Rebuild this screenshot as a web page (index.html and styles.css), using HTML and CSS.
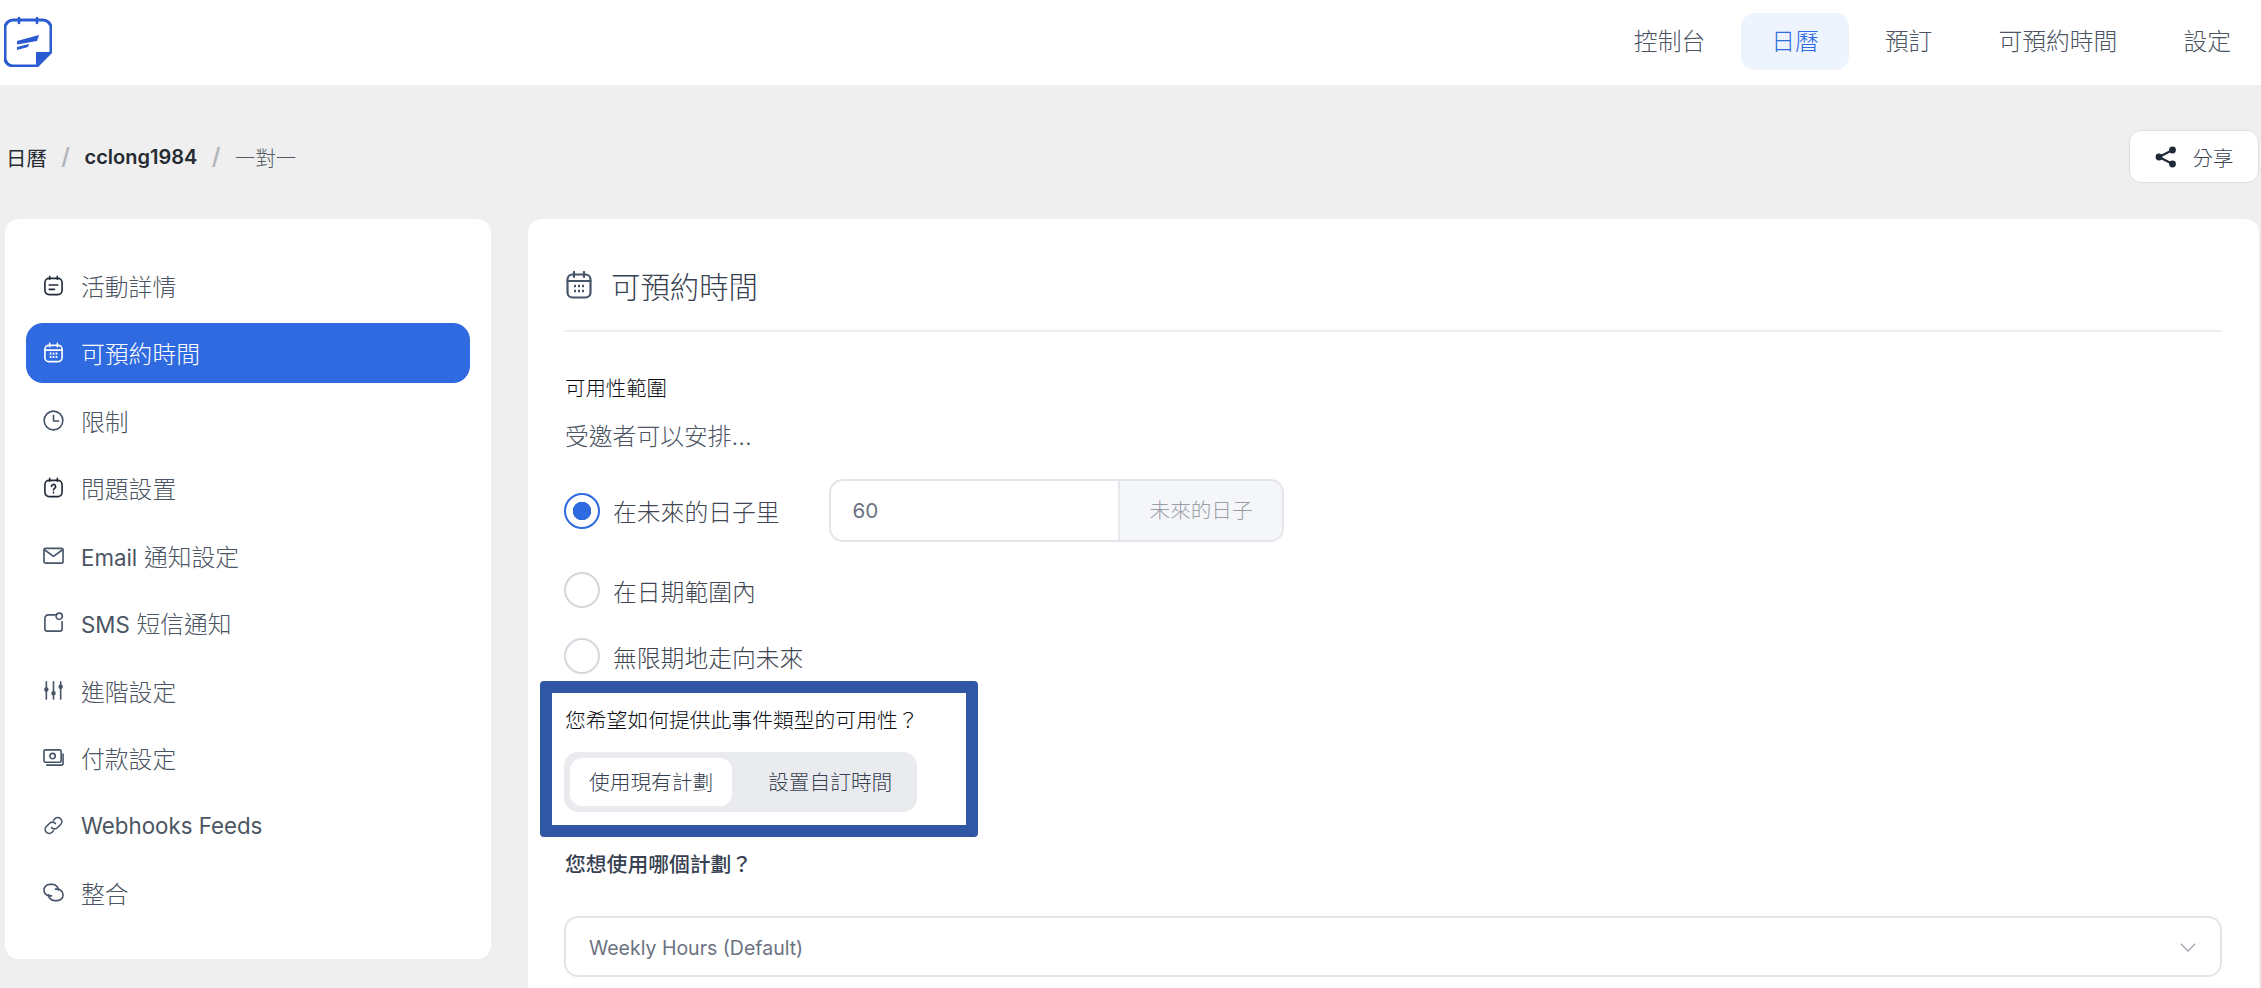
FILE: index.html
```html
<!DOCTYPE html>
<html lang="zh-Hant">
<head>
  <meta charset="UTF-8">
  <title>可預約時間</title>
  <link rel="stylesheet" href="styles.css">
</head>
<body>
  <header class="topbar">
    <svg class="logo" viewBox="0 0 48 50" fill="none">
      <path d="M9 3h30a8 8 0 0 1 8 8v24L33 49H9a8 8 0 0 1-8-8V11a8 8 0 0 1 8-8z" stroke="#2b5bd0" stroke-width="3"/>
      <path d="M15 1v5M33 1v5" stroke="#2b5bd0" stroke-width="2.600" stroke-linecap="round"/>
      <path d="M47 35H32v13z" fill="#2b5bd0"/>
      <path d="M13 24L35 18L33 24L13 27.500z" fill="#2b5bd0"/>
      <path d="M13 30L25 27L24 30L13 33z" fill="#2b5bd0"/>
    </svg>
    <nav class="nav">
      <a class="nav-item">控制台</a>
      <a class="nav-item active">日曆</a>
      <a class="nav-item">預訂</a>
      <a class="nav-item">可預約時間</a>
      <a class="nav-item">設定</a>
    </nav>
  </header>

  <div class="crumb-row">
    <div class="crumbs">
      <span class="crumb-first">日曆</span>
      <span class="crumb-sep">/</span>
      <span class="crumb-strong">cclong1984</span>
      <span class="crumb-sep">/</span>
      <span class="crumb-last">一對一</span>
    </div>
    <button class="share-btn">
      <svg class="share-icon" viewBox="0 0 22 22" fill="#1f2937">
        <circle cx="17.500" cy="4" r="3.400"/>
        <circle cx="4" cy="11" r="3.400"/>
        <circle cx="17.500" cy="18" r="3.400"/>
        <path d="M4 11l13.500-7M4 11l13.500 7" stroke="#1f2937" stroke-width="2.200"/>
      </svg>
      <span>分享</span>
    </button>
  </div>

  <div class="layout">
    <aside class="sidebar">
      <a class="side-item">
        <svg class="side-icon dark" viewBox="0 0 22 22"><rect x="2" y="3.500" width="18" height="17" rx="4.500"/><path d="M7 1.500v3M15 1.500v3M6.500 10.500h9M6.500 15h5.500"/></svg>
        活動詳情
      </a>
      <a class="side-item active">
        <svg class="side-icon" viewBox="0 0 22 22"><rect x="2" y="3.500" width="18" height="17" rx="4"/><path d="M2 8.500h18M7 1.500v3.500M15 1.500v3.500"/><path class="dots" d="M7 12.200h1.800M10.100 12.200h1.800M13.200 12.200h1.800M7 15.700h1.800M10.100 15.700h1.800M13.200 15.700h1.800"/></svg>
        可預約時間
      </a>
      <a class="side-item">
        <svg class="side-icon" viewBox="0 0 22 22"><circle cx="11" cy="11" r="9.800"/><path d="M11 5.500V11.500H16.500"/></svg>
        限制
      </a>
      <a class="side-item">
        <svg class="side-icon dark" viewBox="0 0 22 22"><rect x="2" y="3.500" width="18" height="17" rx="4.500"/><path d="M7 1.500v3M15 1.500v3M8.800 10a2.200 2.200 0 1 1 3.300 1.900c-.8.500-1.100.9-1.100 1.700M11 16v.6"/></svg>
        問題設置
      </a>
      <a class="side-item">
        <svg class="side-icon" viewBox="0 0 22 22"><rect x="1" y="3.500" width="20" height="15.500" rx="1.800"/><path d="M1.500 5l9.500 7 9.500-7"/></svg>
        <span><span class="latin">Email</span> 通知設定</span>
      </a>
      <a class="side-item">
        <svg class="side-icon" viewBox="0 0 22 22"><path d="M13 3H5.500A3.500 3.500 0 0 0 2 6.500v11A2.500 2.500 0 0 0 4.500 20h13a2.500 2.500 0 0 0 2.500-2.500V10"/><circle cx="17" cy="4.500" r="3.300"/></svg>
        <span><span class="latin">SMS</span> 短信通知</span>
      </a>
      <a class="side-item">
        <svg class="side-icon" viewBox="0 0 22 22"><path d="M3.500 2v18M11 2v18M18.500 2v18"/><circle class="knob" cx="3.500" cy="10" r="1.500"/><circle class="knob" cx="11" cy="14" r="1.500"/><circle class="knob" cx="18.500" cy="7" r="1.500"/></svg>
        進階設定
      </a>
      <a class="side-item">
        <svg class="side-icon" viewBox="0 0 22 22"><rect x="1" y="3" width="18" height="13" rx="1.500"/><circle cx="10" cy="9.500" r="2.800"/><path d="M21 7.500V17a2 2 0 0 1-2 2H4"/></svg>
        付款設定
      </a>
      <a class="side-item">
        <svg class="side-icon" viewBox="0 0 22 22"><path d="M9 13a4 4 0 0 0 6 .4l3.500-3.500a4.200 4.200 0 0 0-6-6L11 5.500"/><path d="M13 9a4 4 0 0 0-6-.4l-3.500 3.500a4.200 4.200 0 0 0 6 6L11 16.500"/></svg>
        <span class="latin">Webhooks Feeds</span>
      </a>
      <a class="side-item">
        <svg class="side-icon" viewBox="0 0 22 22"><path d="M9 14.500H7a6 6 0 0 1 0-12h3a6 6 0 0 1 6 6"/><path d="M13 7.500h2a6 6 0 0 1 0 12h-3a6 6 0 0 1-6-6"/></svg>
        整合
      </a>
    </aside>

    <main class="panel">
      <div class="panel-head">
        <svg class="head-icon" viewBox="0 0 26 28"><rect x="1.500" y="3.500" width="23" height="23" rx="5"/><path d="M1.500 10h23M8 1v5M18 1v5"/><path class="dots" d="M8 15h2M12 15h2M16 15h2M8 20h2M12 20h2M16 20h2"/></svg>
        <span>可預約時間</span>
      </div>

      <div class="field-label">可用性範圍</div>
      <div class="field-hint">受邀者可以安排...</div>

      <div class="radio-row first">
        <span class="radio checked"></span>
        <span class="radio-text">在未來的日子里</span>
        <div class="input-group">
          <div class="input-value">60</div>
          <div class="input-addon">未來的日子</div>
        </div>
      </div>
      <div class="radio-row">
        <span class="radio"></span>
        <span class="radio-text">在日期範圍內</span>
      </div>
      <div class="radio-row">
        <span class="radio"></span>
        <span class="radio-text">無限期地走向未來</span>
      </div>

      <section class="marked-box">
        <div class="marked-title">您希望如何提供此事件類型的可用性&#xFF1F;</div>
        <div class="segment">
          <span class="segment-tab active">使用現有計劃</span>
          <span class="segment-tab">設置自訂時間</span>
        </div>
      </section>

      <div class="plan-label">您想使用哪個計劃&#xFF1F;</div>
      <div class="select">
        <span>Weekly Hours (Default)</span>
        <svg class="chevron" viewBox="0 0 16 9"><path d="M.8.800L8 8l7.200-7.200"/></svg>
      </div>
    </main>
  </div>
</body>
</html>
```

FILE: styles.css
```css
html, body {
  height: 100%;
}
body {
  margin: 0;
  overflow: hidden;
  background: #efefef;
  color: #1f2937;
  font-family: Inter, "Noto Sans CJK TC", sans-serif;
  font-size: 20.400px;
  font-weight: 300;
}
a { display: block; }
.latin {
  font-size: 22.300px;
  font-weight: 400;
}

/* top bar */
.topbar {
  height: 85px;
  background: #fff;
  display: flex;
  justify-content: space-between;
  align-items: flex-start;
  padding-left: 4px;
}
.logo {
  width: 48px;
  height: 50px;
  margin-top: 17px;
}
.nav {
  display: flex;
  gap: 6px;
  margin-top: 13px;
}
.nav-item {
  height: 57px;
  line-height: 57px;
  padding: 0 30px;
  font-size: 23.800px;
  color: #4b5563;
  border-radius: 14px;
}
.nav-item.active {
  background: #edf4fe;
  color: #2f6ae0;
}

/* breadcrumb */
.crumb-row {
  display: flex;
  justify-content: space-between;
  align-items: center;
  height: 53px;
  margin: 45px 2px 36px 6px;
}
.crumbs {
  display: flex;
  align-items: center;
}
.crumb-first {
  font-weight: 400;
  color: #262b33;
}
.crumb-strong {
  font-size: 20px;
  font-weight: 600;
  color: #262b33;
}
.crumb-sep {
  margin: 0 14.500px;
  color: #b3b6bc;
  font-weight: 600;
  font-size: 23px;
}
.crumb-last { color: #555b66; }
.share-btn {
  width: 130px;
  height: 53px;
  display: flex;
  align-items: center;
  justify-content: center;
  gap: 16px;
  padding: 0;
  background: #fff;
  border: 1.5px solid #dcdee4;
  border-radius: 12px;
  font: inherit;
  color: #374151;
}
.share-icon {
  width: 22px;
  height: 22px;
}

/* page columns */
.layout {
  display: flex;
  gap: 37px;
  margin: 0 2px 0 5px;
  align-items: flex-start;
}
.sidebar {
  width: 486px;
  height: 740px;
  box-sizing: border-box;
  flex: none;
  padding: 36px 21px;
  background: #fff;
  border-radius: 14px;
}
.side-item {
  display: flex;
  align-items: center;
  gap: 17px;
  height: 60px;
  margin-bottom: 7.500px;
  padding-left: 17px;
  font-size: 23.800px;
  color: #4b5563;
  border-radius: 17px;
}
.side-item.active {
  background: #2f6ae0;
  color: #fff;
}
.side-icon {
  width: 21px;
  height: 21px;
  flex: none;
  fill: none;
  stroke: #475569;
  stroke-width: 1.700;
  stroke-linecap: round;
  stroke-linejoin: round;
}
.side-icon.dark { stroke: #1f2937; }
.side-item.active .side-icon { stroke: #fff; }
.side-icon .knob { fill: #475569; }
.side-icon .dots { stroke-width: 2.200; stroke-linecap: butt; }

/* main panel */
.panel {
  flex: 1;
  height: 800px;
  box-sizing: border-box;
  padding: 37px 37px 0 36px;
  background: #fff;
  border-radius: 14px;
}
.panel-head {
  display: flex;
  align-items: center;
  gap: 19px;
  height: 58px;
  padding: 0 0 16px 2px;
  box-sizing: content-box;
  border-bottom: 2px solid #eceef1;
  font-size: 29.400px;
  color: #374151;
}
.head-icon {
  width: 26px;
  height: 28px;
  fill: none;
  stroke: #475569;
  stroke-width: 2.200;
  stroke-linecap: round;
}
.head-icon .dots { stroke-width: 2.600; stroke-linecap: butt; }
.field-label {
  margin: 42px 0 0 1px;
  line-height: 29px;
  color: #0a0d14;
}
.field-hint {
  margin: 20px 0 0 1px;
  line-height: 28px;
  font-size: 23.800px;
  color: #4b5563;
}
.radio-row {
  display: flex;
  align-items: center;
  height: 36px;
  margin-top: 30px;
  font-size: 23.800px;
  color: #3f4652;
}
.radio-row.first {
  height: 63px;
  margin-top: 28px;
}
.radio {
  width: 36px;
  height: 36px;
  box-sizing: border-box;
  flex: none;
  margin-right: 13px;
  border: 2px solid #d5d7dd;
  border-radius: 50%;
}
.radio.checked {
  border-color: #2f6ae0;
  background: radial-gradient(circle, #2f6ae0 0 9px, #fff 9.500px);
}
.input-group {
  display: flex;
  width: 455px;
  height: 63px;
  box-sizing: border-box;
  margin-left: 49px;
  border: 2px solid #e3e5ea;
  border-radius: 14px;
  overflow: hidden;
  font-size: 20.600px;
}
.input-value {
  flex: 1;
  padding-left: 22px;
  line-height: 59px;
  font-weight: 400;
  color: #6b7280;
}
.input-addon {
  width: 164px;
  padding-left: 30px;
  box-sizing: border-box;
  line-height: 59px;
  background: #f5f6fa;
  border-left: 2px solid #e6e8ed;
  color: #9a9da5;
}

/* the marked question */
.marked-box {
  width: 438px;
  box-sizing: border-box;
  margin: 7px 0 0 -24px;
  padding: 14px 12px 13px;
  border: 12px solid #2f57a4;
  border-radius: 4px;
  background: #fff;
}
.marked-title {
  line-height: 28px;
  font-size: 20.800px;
  color: #0a0d14;
  white-space: nowrap;
  padding-left: 1px;
}
.segment {
  display: flex;
  gap: 17px;
  width: 353px;
  height: 60px;
  box-sizing: border-box;
  margin-top: 17px;
  padding: 6px;
  background: #eaebef;
  border-radius: 14px;
}
.segment-tab {
  height: 48px;
  padding: 0 19px;
  line-height: 50px;
  font-size: 20.700px;
  color: #374151;
  white-space: nowrap;
  border-radius: 12px;
}
.segment-tab.active { background: #fff; }
.plan-label {
  margin: 13px 0 0 1px;
  line-height: 30px;
  font-size: 20.800px;
  font-weight: 500;
  color: #374151;
}
.select {
  display: flex;
  align-items: center;
  justify-content: space-between;
  height: 61px;
  box-sizing: border-box;
  margin-top: 36px;
  padding: 2px 24px 0 23px;
  border: 2px solid #e3e5ea;
  border-radius: 14px;
  font-size: 19.500px;
  font-weight: 400;
  color: #6b7280;
}
.chevron {
  width: 16px;
  height: 9px;
  fill: none;
  stroke: #a3a6ae;
  stroke-width: 1.300;
}
```
